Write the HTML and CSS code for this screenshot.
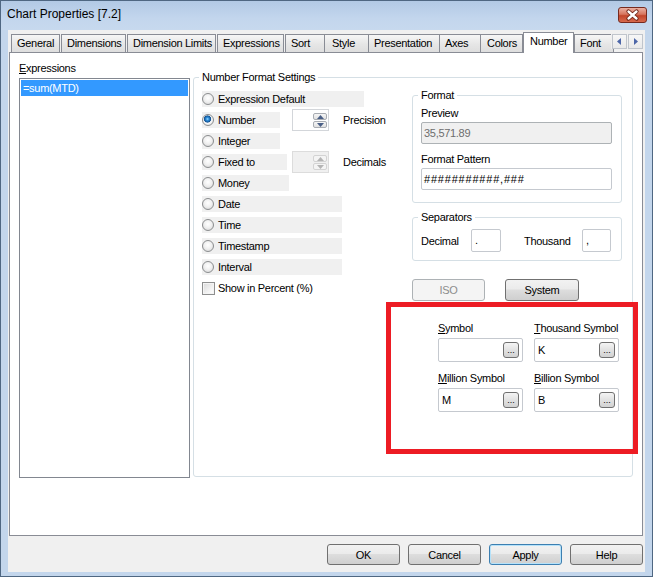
FILE: index.html
```html
<!DOCTYPE html>
<html>
<head>
<meta charset="utf-8">
<title>Chart Properties [7.2]</title>
<link rel="stylesheet" href="styles.css">
</head>
<body>
<div class="window">
  <div class="titlebar">
    <span class="title">Chart Properties [7.2]</span>
    <div class="close">
      <svg width="27" height="14" viewBox="0 0 27 14">
        <path d="M9.5 3.5 L17.5 10.5 M17.5 3.5 L9.5 10.5" stroke="#6a2014" stroke-width="4.2" stroke-linecap="round"/>
        <path d="M9.5 3.5 L17.5 10.5 M17.5 3.5 L9.5 10.5" stroke="#ffffff" stroke-width="2.4" stroke-linecap="round"/>
      </svg>
    </div>
  </div>
  <div class="client">
    <div class="tabs">
      <div class="tab t-general">General</div>
      <div class="tab t-dims">Dimensions</div>
      <div class="tab t-limits">Dimension Limits</div>
      <div class="tab t-expr">Expressions</div>
      <div class="tab t-sort">Sort</div>
      <div class="tab t-style">Style</div>
      <div class="tab t-pres">Presentation</div>
      <div class="tab t-axes">Axes</div>
      <div class="tab t-colors">Colors</div>
      <div class="tab t-number active">Number</div>
      <div class="tab t-font">Font</div>
      <div class="tab-scroll">
        <span class="arrow"><svg width="5" height="7" viewBox="0 0 5 7"><path d="M4 0 L0 3.5 L4 7 Z" fill="#4d66a8"/></svg></span>
        <span class="arrow"><svg width="5" height="7" viewBox="0 0 5 7"><path d="M1 0 L5 3.5 L1 7 Z" fill="#4d66a8"/></svg></span>
      </div>
    </div>
    <div class="panel">
      <div class="expr-col">
        <div class="lbl"><u>E</u>xpressions</div>
        <div class="listbox">
          <div class="item selected">=sum(MTD)</div>
        </div>
      </div>
      <fieldset class="group">
        <legend>Number Format Settings</legend>
        <div class="group-body">
          <div class="radios">
            <div class="row"><span class="opt w162"><span class="radio"></span>Expression Default</span></div>
            <div class="row">
              <span class="opt-cell"><span class="opt w78"><span class="radio on"></span>Number</span></span>
              <span class="spin"><span class="spin-btns"><span class="sb"><svg width="7" height="4" viewBox="0 0 7 4"><path d="M0 4 L3.5 0 L7 4 Z" fill="#4a5f86"/></svg></span><span class="sb"><svg width="7" height="4" viewBox="0 0 7 4"><path d="M0 0 L3.5 4 L7 0 Z" fill="#4a5f86"/></svg></span></span></span>
              <span class="spin-lbl">Precision</span>
            </div>
            <div class="row"><span class="opt w78"><span class="radio"></span>Integer</span></div>
            <div class="row">
              <span class="opt-cell"><span class="opt w85"><span class="radio"></span>Fixed to</span></span>
              <span class="spin off"><span class="spin-btns"><span class="sb"><svg width="7" height="4" viewBox="0 0 7 4"><path d="M0 4 L3.5 0 L7 4 Z" fill="#b4b4b4"/></svg></span><span class="sb"><svg width="7" height="4" viewBox="0 0 7 4"><path d="M0 0 L3.5 4 L7 0 Z" fill="#b4b4b4"/></svg></span></span></span>
              <span class="spin-lbl">Decimals</span>
            </div>
            <div class="row"><span class="opt w87"><span class="radio"></span>Money</span></div>
            <div class="row"><span class="opt w140"><span class="radio"></span>Date</span></div>
            <div class="row"><span class="opt w140"><span class="radio"></span>Time</span></div>
            <div class="row"><span class="opt w140"><span class="radio"></span>Timestamp</span></div>
            <div class="row"><span class="opt w140"><span class="radio"></span>Interval</span></div>
            <div class="row check-row"><span class="check"></span>Show in Percent (%)</div>
          </div>
          <div class="format-col">
            <fieldset class="box fmt">
              <legend>Format</legend>
              <div class="lbl">Preview</div>
              <div class="field disabled">35,571.89</div>
              <div class="lbl pattern-lbl">Format Pattern</div>
              <div class="field pattern">###########,###</div>
            </fieldset>
            <fieldset class="box sep">
              <legend>Separators</legend>
              <div class="sep-row">
                <span class="sep-lbl dec">Decimal</span>
                <span class="field sep-dec">.</span>
                <span class="sep-lbl th">Thousand</span>
                <span class="field sep-th">,</span>
              </div>
            </fieldset>
            <div class="btn-row">
              <span class="btn iso disabled">ISO</span>
              <span class="btn sys">System</span>
            </div>
            <div class="callout">
              <div class="sym-grid">
                <div class="sym">
                  <div class="lbl"><u>S</u>ymbol</div>
                  <div class="sym-field"><span class="sym-val"></span><span class="dots">...</span></div>
                </div>
                <div class="sym">
                  <div class="lbl"><u>T</u>housand Symbol</div>
                  <div class="sym-field"><span class="sym-val">K</span><span class="dots">...</span></div>
                </div>
                <div class="sym">
                  <div class="lbl"><u>M</u>illion Symbol</div>
                  <div class="sym-field"><span class="sym-val">M</span><span class="dots">...</span></div>
                </div>
                <div class="sym">
                  <div class="lbl"><u>B</u>illion Symbol</div>
                  <div class="sym-field"><span class="sym-val">B</span><span class="dots">...</span></div>
                </div>
              </div>
            </div>
          </div>
        </div>
      </fieldset>
    </div>
    <div class="buttons">
      <span class="btn dlg">OK</span>
      <span class="btn dlg">Cancel</span>
      <span class="btn dlg focused">Apply</span>
      <span class="btn dlg">Help</span>
    </div>
  </div>
</div>
</body>
</html>
```

FILE: styles.css
```css
* { box-sizing: border-box; }
html, body { margin: 0; padding: 0; }
body {
  width: 653px;
  height: 577px;
  overflow: hidden;
  background: #ffffff;
  font-family: "Liberation Sans", Arial, sans-serif;
  font-size: 11px;
  line-height: 14px;
  letter-spacing: -0.3px;
  color: #000;
}
u { text-decoration: underline; text-underline-offset: 1px; }

.window {
  width: 653px;
  height: 577px;
  display: flex;
  flex-direction: column;
  background: #c3d6ec;
  border: 1px solid #4f6782;
}

.titlebar {
  height: 29px;
  flex: none;
  display: flex;
  justify-content: space-between;
  align-items: flex-start;
  padding: 0 5px 0 6px;
  background: linear-gradient(#b2c9e5, #c3d6ed 60%, #c7d9ee);
}
.title { font-size: 12px; line-height: 14px; margin-top: 6px; letter-spacing: 0; }
.close {
  margin-top: 6px;
  width: 29px;
  height: 16px;
  border: 1px solid #762a1f;
  border-radius: 3px;
  background: linear-gradient(#eab0a2, #d7755e 45%, #c2452b 55%, #d76a4e);
  display: flex;
}

.client {
  flex: 1;
  display: flex;
  flex-direction: column;
  margin: 0 7px 4px 7px;
  padding: 2px 2px 0 1px;
  background: #f0f0f0;
}

.tabs {
  height: 20px;
  flex: none;
  display: flex;
  align-items: flex-end;
  padding-left: 2px;
  position: relative;
  z-index: 1;
}
.tab {
  height: 18px;
  padding-left: 5px;
  border: 1px solid #898c95;
  border-bottom: none;
  background: linear-gradient(#f6f6f6, #e6e6e6 55%, #dedede);
  line-height: 16px;
  white-space: nowrap;
  flex: none;
  overflow: hidden;
}
.t-general { width: 49px; margin-right: 1px; }
.t-dims { width: 65px; margin-right: 1px; }
.t-limits { width: 89px; margin-right: 1px; }
.t-expr { width: 67px; margin-right: 1px; }
.t-sort { width: 40px; margin-right: -1px; }
.t-style { width: 45px; margin-right: -1px; padding-left: 7px; }
.t-pres { width: 72px; margin-right: -1px; }
.t-axes { width: 42px; margin-right: -1px; }
.t-colors { width: 43px; padding-left: 6px; }
.t-number { width: 51px; padding-left: 6px; }
.t-font { width: 40px; }
.tab.active {
  height: 21px;
  margin-bottom: -1px;
  background: #ffffff;
  position: relative;
  z-index: 2;
}
.tab-scroll {
  position: absolute;
  right: 0;
  top: 2px;
  display: flex;
  gap: 1px;
  background: #f0f0f0;
  padding-left: 1px;
  z-index: 3;
}
.arrow {
  width: 15px;
  height: 15px;
  border: 1px solid #c0c5cc;
  background: linear-gradient(#f7f7f7, #e9e9e9);
  display: flex;
  align-items: center;
  justify-content: center;
}

.panel {
  flex: 1;
  display: flex;
  align-items: flex-start;
  border: 1px solid #898c95;
  background: #ffffff;
  padding: 8px 9px 0 9px;
}

.expr-col { width: 171px; flex: none; }
.expr-col .lbl { margin-bottom: 3px; }
.listbox {
  height: 400px;
  border: 1px solid #828790;
  padding: 1px;
}
.item { height: 16px; line-height: 16px; padding-left: 2px; }
.item.selected { background: #3399ff; color: #ffffff; }

.group {
  margin: 9px 0 0 3px;
  flex: 1;
  min-width: 0;
  height: 407px;
  border: 1px solid #d5dfe5;
  border-radius: 3px;
  padding: 4px 8px 0 8px;
}
.group legend, .box legend {
  padding: 0 3px;
  margin-left: -3px;
  line-height: 14px;
}
.group-body { display: flex; }

.radios { width: 210px; flex: none; padding-top: 3px; }
.row {
  display: flex;
  align-items: center;
  height: 16px;
  margin-bottom: 5px;
}
.opt {
  display: flex;
  align-items: center;
  height: 16px;
  background: #f0f0f0;
}
.w162 { width: 162px; }
.w78 { width: 78px; }
.w85 { width: 85px; }
.w87 { width: 87px; }
.w140 { width: 140px; }
.opt-cell { width: 90px; flex: none; }
.radio {
  width: 12px;
  height: 12px;
  margin-right: 4px;
  border-radius: 50%;
  border: 1px solid #8b8d8f;
  background: radial-gradient(circle at 50% 40%, #ffffff 0, #f1f1f1 45%, #d3d3d3 100%);
  flex: none;
}
.radio.on {
  background: radial-gradient(circle at 45% 40%, #9fdcff 0, #2f8fdc 1.5px, #12508f 3.3px, #dfe8f0 3.8px, #f6f6f6 55%, #d6d6d6 100%);
}
.spin {
  width: 37px;
  height: 22px;
  flex: none;
  border: 1px solid #d3d6da;
  background: #ffffff;
  display: flex;
  justify-content: flex-end;
  padding: 3px 1px 2px 0;
}
.spin.off { background: #f0f0f0; border-color: #dcdcdc; }
.spin-btns { width: 14px; display: flex; flex-direction: column; gap: 1px; }
.sb {
  flex: 1;
  border: 1px solid #a8acb2;
  border-radius: 2px;
  background: linear-gradient(#f6f6f6, #e0e0e0);
  display: flex;
  align-items: center;
  justify-content: center;
}
.spin.off .sb { border-color: #d3d3d3; background: #f4f4f4; }
.spin-lbl { margin-left: 14px; }
.check-row { margin-top: 4px; }
.check {
  width: 13px;
  height: 13px;
  margin-right: 3px;
  border: 1px solid #8e8f8f;
  background: linear-gradient(135deg, #d9d9d9, #f6f6f6 70%, #ffffff);
  box-shadow: inset 0 0 0 1px #f4f4f4;
  flex: none;
}

.format-col { width: 210px; flex: none; }
.box {
  margin: 0;
  min-width: 0;
  border: 1px solid #d5dfe5;
  border-radius: 3px;
}
.fmt { padding: 4px 9px 12px 8px; }
.field {
  display: block;
  height: 22px;
  border: 1px solid #c5c9cf;
  border-radius: 2px;
  background: #ffffff;
  padding: 0 2px;
  line-height: 20px;
  white-space: nowrap;
}
.fmt .field { margin-top: 2px; }
.field.pattern { letter-spacing: 0.8px; }
.field.disabled { background: #f0f0f0; border-color: #adb2b5; color: #6d6d6d; }
.pattern-lbl { margin-top: 8px; }

.sep { margin-top: 7px; padding: 5px 9px 8px 8px; }
.sep-row { display: flex; align-items: center; }
.sep-lbl.dec { width: 50px; }
.sep-lbl.th { width: 58px; margin-left: 23px; }
.field.sep-dec { width: 30px; height: 23px; padding-left: 3px; }
.field.sep-th { width: 29px; height: 23px; padding-left: 3px; }

.btn-row { display: flex; gap: 20px; margin-top: 18px; }
.btn {
  height: 22px;
  border: 1px solid #707070;
  border-radius: 3px;
  background: linear-gradient(#f2f2f2, #ebebeb 45%, #dddddd 50%, #cfcfcf);
  display: flex;
  align-items: center;
  justify-content: center;
  white-space: nowrap;
}
.btn.iso { width: 73px; }
.btn.sys { width: 74px; }
.btn.disabled { border-color: #adb2b5; background: #f4f4f4; color: #8d8d8d; }

.callout {
  margin: 1px 0 0 -26px;
  width: 252px;
  height: 152px;
  border: 5px solid #ed1c24;
  padding: 14px 0 0 47px;
}
.sym-grid {
  display: grid;
  grid-template-columns: 85px 85px;
  column-gap: 11px;
  row-gap: 9px;
}
.sym .lbl { margin-bottom: 3px; white-space: nowrap; }
.sym-field {
  height: 24px;
  border: 1px solid #c5c9cf;
  border-radius: 2px;
  display: flex;
  align-items: center;
  justify-content: space-between;
  padding: 0 3px 0 3px;
}
.dots {
  width: 16px;
  height: 16px;
  border: 1px solid #707070;
  border-radius: 3px;
  background: linear-gradient(#f4f4f4, #e2e2e2 50%, #d2d2d2);
  font-size: 9px;
  line-height: 9px;
  letter-spacing: 0;
  display: flex;
  align-items: flex-end;
  justify-content: center;
  padding-bottom: 2px;
}

.buttons {
  flex: none;
  height: 21px;
  margin: 8px 0 7px 0;
  display: flex;
  justify-content: flex-end;
  gap: 8px;
}
.btn.dlg { width: 73px; height: 21px; }
.btn.focused { border-color: #3c7fb1; box-shadow: inset 0 0 0 1px #b5e2fa; }
```
